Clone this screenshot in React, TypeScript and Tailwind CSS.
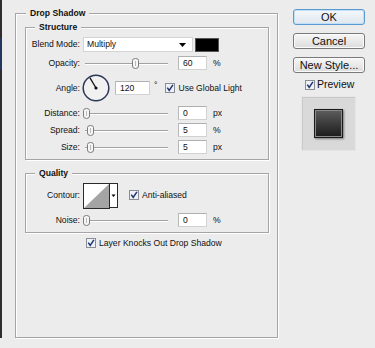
import React from "react";

const Check = () => (
  <svg width="10" height="10" viewBox="0 0 10 10" className="shrink-0">
    <rect x="0.5" y="0.5" width="9" height="9" fill="#eef2f8" stroke="#8a8d94" />
    <path d="M2.3 4.6 L4.2 7.4 L7.9 1.8" fill="none" stroke="#1f3470" strokeWidth="1.5" />
  </svg>
);

const Num = ({ v, w = "w-[29px]" }: { v: string; w?: string }) => (
  <div className={`${w} h-[14px] bg-white border border-[#d2d2d2] border-t-[#b0b0b0] border-l-[#b8b8b8] pl-[4px] leading-[12px] shrink-0`}>
    {v}
  </div>
);

const Label = ({ t }: { t: string }) => (
  <div className="w-[54px] text-right shrink-0">{t}</div>
);

const Slider = ({ thumb }: { thumb: string }) => (
  <div className="relative w-[85px] h-[12px] ml-[3px] shrink-0">
    <div className="absolute left-[2px] right-0 top-[6px] h-[2px] border-t border-[#a2a2a2] bg-white" />
    <div className={`absolute top-[1px] ${thumb}`}>
      <svg width="7" height="11" viewBox="0 0 7 11">
        <path
          d="M0.5 2.5 Q0.5 0.5 3.5 0.5 Q6.5 0.5 6.5 2.5 V8 Q6.5 10.5 3.5 10.5 Q0.5 10.5 0.5 8 Z"
          fill="#f6f6f6"
          stroke="#7c7c7c"
        />
        <path d="M3.5 3 V8" stroke="#b8b8b8" />
      </svg>
    </div>
  </div>
);

const SliderRow = ({
  label,
  thumb,
  value,
  unit,
  className = "",
}: {
  label: string;
  thumb: string;
  value: string;
  unit: string;
  className?: string;
}) => (
  <div className={`flex items-center h-[14px] ${className}`}>
    <Label t={label} />
    <Slider thumb={thumb} />
    <div className="ml-[10px]">
      <Num v={value} />
    </div>
    <div className="ml-[6px]">{unit}</div>
  </div>
);

const Button = ({ children, primary = false, className = "" }: { children: React.ReactNode; primary?: boolean; className?: string }) => (
  <div
    className={`h-[16px] w-[72px] rounded-[3px] border flex items-center justify-center text-[11px] leading-none text-[#111] ${
      primary
        ? "border-[#5b9ad0] bg-linear-to-b from-[#f4f8fb] to-[#dfe7ee] shadow-[inset_0_0_0_1px_#bfe0f5]"
        : "border-[#7a7a7a] bg-linear-to-b from-[#f7f7f7] to-[#dcdcdc] shadow-[inset_0_0_0_1px_#fbfbfb]"
    } ${className}`}
  >
    {children}
  </div>
);

export default function App() {
  return (
    <div className="w-[375px] h-[348px] bg-[#ececec] flex overflow-hidden font-['Liberation_Sans',Arial,sans-serif] text-[8.6px] text-[#111]">
      <div className="w-[2px] h-[338px] flex flex-col shrink-0">
        <div className="h-[38px] bg-[#2e2e2e]" />
        <div className="h-[32px] bg-[#26365f]" />
        <div className="flex-1 bg-[#2e2e2e]" />
      </div>

      <fieldset className="ml-[13px] mt-[8px] w-[263px] h-[330px] border border-[#a5a5a5] shadow-[inset_1px_1px_0_#fff,1px_1px_0_#fff] shrink-0">
        <legend className="ml-[10px] px-[4px] font-bold leading-[11px] bg-[#ececec]">Drop Shadow</legend>
        <div className="pl-[9px] pt-[3px]">
          <fieldset className="w-[244px] border border-[#a5a5a5] shadow-[inset_1px_1px_0_#fff,1px_1px_0_#fff]">
            <legend className="ml-[9px] px-[4px] font-bold leading-[11px] bg-[#ececec]">Structure</legend>
            <div className="pt-[4px] pb-[5px]">
              <div className="flex items-center h-[15px]">
                <Label t="Blend Mode:" />
                <div className="ml-[3px] w-[110px] h-[15px] bg-white border border-[#d4d4d4] flex items-center pl-[3px] pr-[6px] justify-between">
                  <span>Multiply</span>
                  <svg width="7" height="4" viewBox="0 0 7 4">
                    <path d="M0 0 H7 L3.5 4 Z" fill="#000" />
                  </svg>
                </div>
                <div className="ml-[2px] w-[24px] h-[14px] bg-black border border-[#555]" />
              </div>

              <SliderRow className="mt-[4px]" label="Opacity:" thumb="left-[49px]" value="60" unit="%" />

              <div className="flex items-center h-[28px] mt-[4px]">
                <Label t="Angle:" />
                <svg width="28" height="28" viewBox="0 0 28 28" className="ml-[2px] shrink-0">
                  <circle cx="14" cy="14" r="12.8" fill="#f1f1f1" stroke="#2c3856" strokeWidth="1.5" />
                  <line x1="14" y1="14" x2="8" y2="3.8" stroke="#111" strokeWidth="1.3" />
                  <circle cx="14" cy="14" r="1.6" fill="#111" />
                </svg>
                <div className="ml-[5px]">
                  <Num v="120" w="w-[35px]" />
                </div>
                <div className="ml-[4px] -mt-[6px]">°</div>
                <div className="ml-[8px] flex items-center">
                  <Check />
                  <span className="ml-[3px]">Use Global Light</span>
                </div>
              </div>

              <SliderRow className="mt-[4px]" label="Distance:" thumb="left-[0px]" value="0" unit="px" />
              <SliderRow className="mt-[3px]" label="Spread:" thumb="left-[4px]" value="5" unit="%" />
              <SliderRow className="mt-[3px]" label="Size:" thumb="left-[4px]" value="5" unit="px" />
            </div>
          </fieldset>

          <fieldset className="mt-[8px] w-[244px] border border-[#a5a5a5] shadow-[inset_1px_1px_0_#fff,1px_1px_0_#fff]">
            <legend className="ml-[9px] px-[4px] font-bold leading-[11px] bg-[#ececec]">Quality</legend>
            <div className="pt-[4px] pb-[5px]">
              <div className="flex items-center h-[25px]">
                <Label t="Contour:" />
                <svg width="35" height="26" viewBox="0 0 35 26" className="ml-[3px] shrink-0">
                  <rect x="0.5" y="0.5" width="26" height="25" fill="#fff" stroke="#2a2a2a" />
                  <path d="M1 25 L26 1 L26 25 Z" fill="#a4a4a4" />
                  <rect x="26.5" y="0.5" width="8" height="24" fill="#fff" stroke="#2a2a2a" />
                  <path d="M28.5 11.5 L32.5 11.5 L30.5 14 Z" fill="#000" />
                </svg>
                <div className="ml-[11px] flex items-center">
                  <Check />
                  <span className="ml-[3px]">Anti-aliased</span>
                </div>
              </div>
              <SliderRow className="mt-[5px]" label="Noise:" thumb="left-[0px]" value="0" unit="%" />
            </div>
          </fieldset>

          <div className="mt-[5px] ml-[61px] flex items-center h-[10px]">
            <Check />
            <span className="ml-[3px]">Layer Knocks Out Drop Shadow</span>
          </div>
        </div>
      </fieldset>

      <div className="ml-[15px] pt-[9px] w-[72px] flex flex-col shrink-0">
        <Button primary>OK</Button>
        <Button className="mt-[8px]">Cancel</Button>
        <Button className="mt-[8px]">New Style...</Button>
        <div className="mt-[6px] pl-[12px] flex items-center h-[11px]">
          <Check />
          <span className="ml-[2px] text-[10.5px]">Preview</span>
        </div>
        <div className="mt-[6px] ml-[8px] w-[55px] h-[55px] bg-[#d9d9d9] border border-[#e6e6e6] shadow-[inset_1px_1px_0_#c9c9c9] flex items-center justify-center">
          <div className="w-[29px] h-[29px] border border-[#1a1a1a] bg-linear-to-b from-[#5e5e5e] to-[#1c1c1c] shadow-[inset_0_0_0_1px_#8a8a8a,1px_1px_2px_#777]" />
        </div>
      </div>
    </div>
  );
}
